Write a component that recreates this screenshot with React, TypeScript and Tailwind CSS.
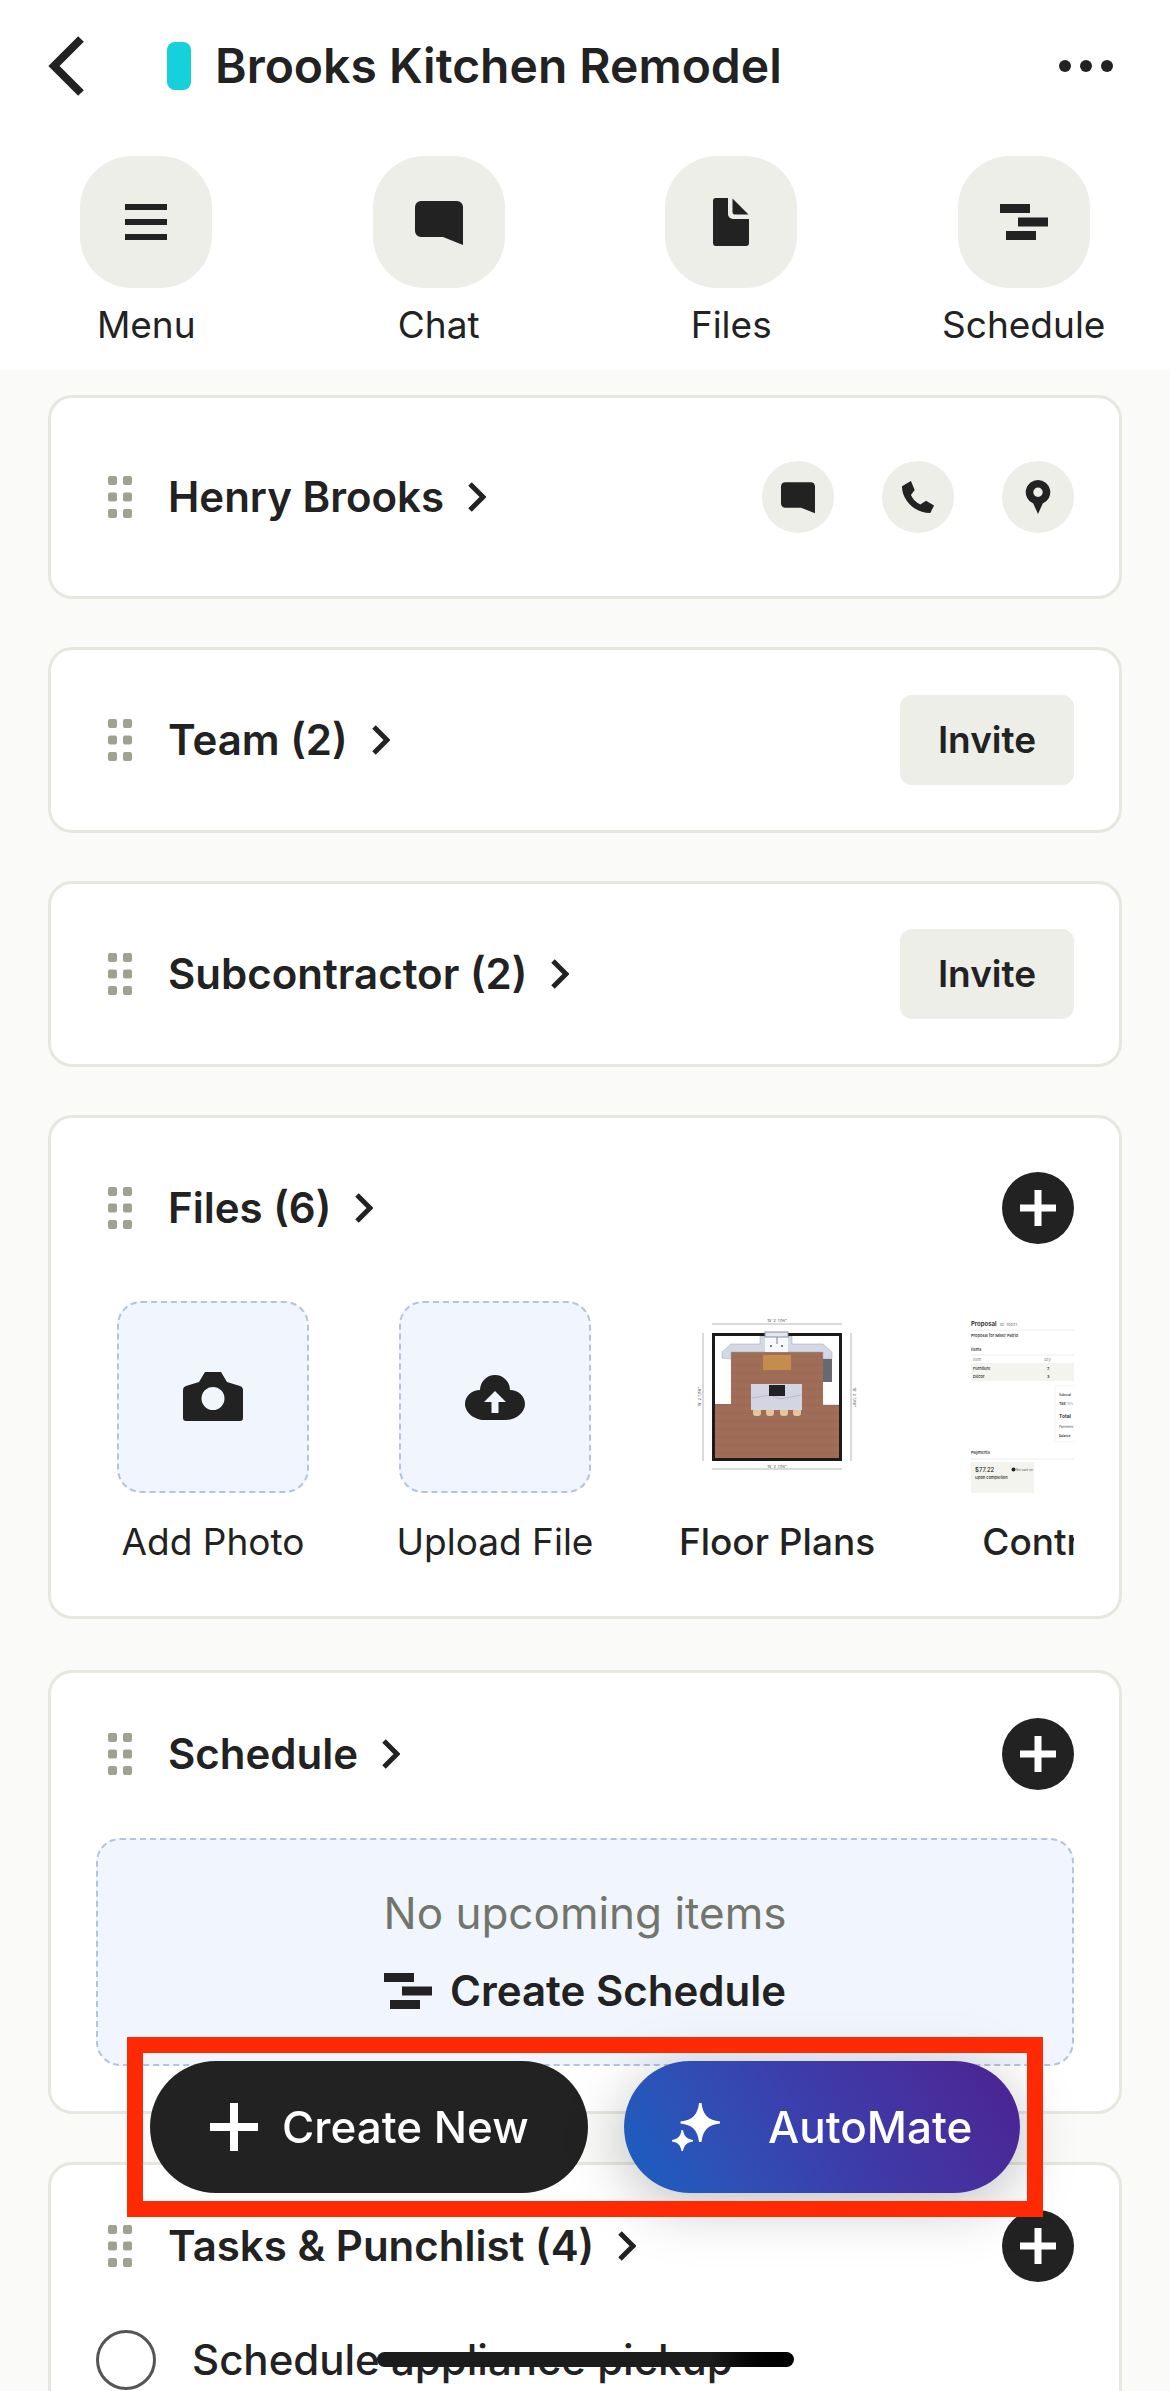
import type { ReactNode } from "react";

type IconProps = { className?: string };

const MenuIcon = ({ className }: IconProps) => (
  <svg viewBox="0 0 48 48" className={className} fill="currentColor" aria-hidden="true">
    <path d="M3 6h42v6H3zM3 21h42v6H3zM3 36h42v6H3z" />
  </svg>
);

const ChatIcon = ({ className }: IconProps) => (
  <svg viewBox="0 0 48 48" className={className} fill="currentColor" aria-hidden="true">
    <path d="M6 3h36a6 6 0 0 1 6 6v38l-20-8H6a6 6 0 0 1-6-6V9a6 6 0 0 1 6-6z" />
  </svg>
);

const FileIcon = ({ className }: IconProps) => (
  <svg viewBox="0 0 48 48" className={className} fill="currentColor" aria-hidden="true">
    <path d="M9 0h12v16a5 5 0 0 0 5 5h16v24a3 3 0 0 1-3 3H9a3 3 0 0 1-3-3V3a3 3 0 0 1 3-3z" />
    <path d="M25.500 0.500L41.500 16.500H28a2.500 2.500 0 0 1-2.500-2.500z" />
  </svg>
);

const ScheduleIcon = ({ className }: IconProps) => (
  <svg viewBox="0 0 48 48" className={className} fill="currentColor" aria-hidden="true">
    <path d="M0 6h30v9H0zM18 19.500h30v9H18zM6 33h30v9H6z" />
  </svg>
);

const PhoneIcon = ({ className }: IconProps) => (
  <svg viewBox="0 0 36 36" className={className} fill="currentColor" aria-hidden="true">
    <path d="M1 6.500L10.500 1l4 9.500-4 5.500c2 4.500 5.300 8 10 10l6-4 8.500 5-4 8C15.500 35 1 22 1 6.500z" />
  </svg>
);

const PinIcon = ({ className }: IconProps) => (
  <svg viewBox="0 0 36 36" className={className} fill="currentColor" fillRule="evenodd" aria-hidden="true">
    <path d="M18 0A13 13 0 0 0 13 25L18 36l5-11A13 13 0 0 0 18 0zM18 8a5 5 0 1 1 0 10 5 5 0 0 1 0-10z" />
  </svg>
);

const CameraIcon = ({ className }: IconProps) => (
  <svg viewBox="0 0 60 60" className={className} fill="currentColor" fillRule="evenodd" aria-hidden="true">
    <path d="M22 5h16l6 10 13 4q3 1 3 4v28a3 3 0 0 1-3 3H3a3 3 0 0 1-3-3V23q0-3 3-4l13-4zM30 20a11.500 11.500 0 1 0 0 23 11.500 11.500 0 0 0 0-23z" />
  </svg>
);

const CloudIcon = ({ className }: IconProps) => (
  <svg viewBox="0 0 60 60" className={className} fill="currentColor" fillRule="evenodd" aria-hidden="true">
    <path d="M15 23a15 15 0 0 1 30 0c8 0 15 6 15 14 0 9-10 16-19 16H19C10 53 0 46 0 37c0-8 7-14 15-14zM30 24L19 35h7.500v11h7V35H41z" />
  </svg>
);

const SparkleIcon = ({ className }: IconProps) => (
  <svg viewBox="0 0 48 48" className={className} fill="currentColor" aria-hidden="true">
    <path d="M27 0h2.500C31 12 36 17 48 18.500v2C36 22 31 27 29.500 39H27C25.500 27 20.500 22 8.500 20.500v-2C20.500 17 25.500 12 27 0z" />
    <path d="M9.500 27h1.500C12 33.500 15 36 21 37v1.500C15 39.500 12 42 11 48H9.500C8.500 42 6 39.500 0 38.500V37C6 36 8.500 33.500 9.500 27z" />
  </svg>
);

const PlusIcon = ({ className }: IconProps) => (
  <svg viewBox="0 0 36 36" className={className} fill="none" stroke="currentColor" aria-hidden="true">
    <path d="M18 0v36M0 18h36" />
  </svg>
);

const ChevronRight = () => (
  <svg viewBox="0 0 18 30" className="h-[30px] w-[18px]" fill="none" stroke="currentColor" strokeWidth="5" aria-hidden="true">
    <path d="M2 2l13 13L2 28" />
  </svg>
);

const DragHandle = () => (
  <svg viewBox="0 0 24 42" className="ml-3 h-[42px] w-6 text-[#a0a291]" fill="currentColor" aria-hidden="true">
    {[0, 16.5, 33].map((y) => (
      <g key={y}>
        <rect y={y} width="9" height="9" rx="2" />
        <rect x="15" y={y} width="9" height="9" rx="2" />
      </g>
    ))}
  </svg>
);

const shortcuts = [
  { label: "Menu", Icon: MenuIcon },
  { label: "Chat", Icon: ChatIcon },
  { label: "Files", Icon: FileIcon },
  { label: "Schedule", Icon: ScheduleIcon },
];

const contactActions = [
  { label: "Message", Icon: ChatIcon },
  { label: "Call", Icon: PhoneIcon },
  { label: "Map", Icon: PinIcon },
];

function Card({ children, className = "" }: { children: ReactNode; className?: string }) {
  return (
    <section className={`rounded-3xl border-3 border-[#e6e7de] bg-white px-[45px] ${className}`}>
      {children}
    </section>
  );
}

function CardHeader({ title, children }: { title: string; children: ReactNode }) {
  return (
    <div className="flex items-center justify-between">
      <div className="flex items-center gap-9">
        <DragHandle />
        <h2 className="text-[42px] leading-[54px] font-semibold">
          <a href="#" className="flex items-center gap-6">
            {title}
            <ChevronRight />
          </a>
        </h2>
      </div>
      {children}
    </div>
  );
}

function InviteButton() {
  return (
    <button className="h-[90px] w-[174px] rounded-xl bg-[#edeee8] text-[37px] font-semibold">
      Invite
    </button>
  );
}

function AddButton({ label }: { label: string }) {
  return (
    <button
      aria-label={label}
      className="flex size-[72px] items-center justify-center rounded-full bg-[#222] text-white"
    >
      <PlusIcon className="size-9 stroke-7" />
    </button>
  );
}

function FloorPlan() {
  return (
    <svg viewBox="0 0 192 192" className="size-48" role="img" aria-label="Floor plan">
      <rect x="33.500" y="34.500" width="125" height="123" fill="#fff" />
      <path d="M50 50h92v54h16v54H33V103h17z" fill="#a06d58" />
      {[56, 64, 72, 80, 88, 96, 104, 112, 120, 128, 136, 144, 152].map((y) => (
        <path key={y} d={y < 104 ? `M50 ${y}h91` : `M34 ${y}h124`} stroke="#8e5c49" strokeOpacity="0.35" />
      ))}
      {/* counters and sink */}
      <path d="M41 57v-6l9-8h29v-8h32v8h31l9 8v7h-9v-7H50v7z" fill="#d3d8e4" stroke="#9aa0ac" strokeWidth="0.500" />
      <path d="M84 36h23v15H84z" fill="#f6f8fc" />
      <path d="M96 36v7" stroke="#777c88" />
      <circle cx="90" cy="45" r="1" fill="#555" />
      <circle cx="101" cy="45" r="1" fill="#555" />
      <rect x="82" y="54" width="28" height="15" fill="#c48d4e" />
      <rect x="142" y="58" width="9" height="23" fill="#666a70" />
      {/* island */}
      <rect x="72" y="107" width="8" height="8" rx="3" fill="#e3c69c" />
      <rect x="85" y="107" width="8" height="8" rx="3" fill="#e3c69c" />
      <rect x="99" y="107" width="8" height="8" rx="3" fill="#e3c69c" />
      <rect x="112" y="107" width="8" height="8" rx="3" fill="#e3c69c" />
      <rect x="70" y="83" width="51" height="26" fill="#d3d6e2" />
      <path d="M71 97l18-3 10 4 21-4" fill="none" stroke="#a9adbb" strokeWidth="0.700" />
      <rect x="88" y="84" width="16" height="11" fill="#222" />
      {/* walls */}
      <rect x="32.500" y="33.500" width="127" height="125" fill="none" stroke="#1d1a19" strokeWidth="3" />
      <rect x="84" y="31" width="23" height="5" fill="#e3e6ee" stroke="#8a8fa0" />
      <path d="M31 23h130M31 168h130M22 32v128M170 32v128" stroke="#b5b5b5" />
      <g fill="#444" className="font-['Inter',sans-serif] text-[4px]" textAnchor="middle">
        <text x="96" y="21">15' 2 7/16"</text>
        <text x="96" y="167">15' 2 7/16"</text>
        <text transform="translate(20 96) rotate(-90)">15' 2 7/16"</text>
        <text transform="translate(172 96) rotate(90)">15' 2 7/16"</text>
      </g>
    </svg>
  );
}

function ProposalPreview() {
  return (
    <svg viewBox="0 0 192 192" className="size-48" role="img" aria-label="Proposal">
      <path d="M8 29h184M8 54h184M8 158h184" stroke="#ecece8" />
      <rect x="8" y="62" width="184" height="18" fill="#f4f4ef" />
      <rect x="8" y="161" width="63" height="31" fill="#f4f4ef" />
      <rect x="92" y="85" width="100" height="56" fill="#fff" stroke="#f4f4f1" />
      <path d="M96 125h96" stroke="#ddd" />
      <g fill="#222" className="font-['Inter',sans-serif] text-[4px] font-medium">
        <text x="8" y="25" className="text-[6px] font-semibold">Proposal</text>
        <text x="37" y="25" fill="#888">ID: 10021</text>
        <text x="8" y="36">Proposal for Miller Patrio</text>
        <text x="8" y="50">Items</text>
        <text x="10" y="60" fill="#999">Item</text>
        <text x="81" y="60" fill="#999">Qty</text>
        <text x="10" y="69">Furniture</text>
        <text x="84" y="69">2</text>
        <text x="10" y="77">Décor</text>
        <text x="84" y="77">3</text>
        <text x="96" y="95" className="text-[3px]">Subtotal</text>
        <text x="96" y="104">Tax</text>
        <text x="104" y="104" fill="#999" className="text-[3px]">10%</text>
        <text x="96" y="117" className="text-[5px] font-semibold">Total</text>
        <text x="96" y="127" fill="#777" className="text-[3px]">Payments</text>
        <text x="96" y="136" className="text-[3px]">Balance</text>
        <text x="8" y="153">Payments</text>
        <text x="12" y="171" className="text-[6px]">$77.22</text>
        <circle cx="50.500" cy="168.500" r="2" />
        <text x="53" y="170" fill="#777" className="text-[3px]">Not paid yet</text>
        <text x="12" y="178">Upon completion</text>
      </g>
    </svg>
  );
}

function FileTile({ label, children }: { label: string; children: ReactNode }) {
  return (
    <button className="flex w-48 shrink-0 flex-col items-center gap-6 whitespace-nowrap">
      <span className="flex size-48 items-center justify-center rounded-3xl border-2 border-dashed border-[#b6c3dc] bg-[#f1f5fe]">
        {children}
      </span>
      <span className="text-[37px] leading-[50px]">{label}</span>
    </button>
  );
}

function FilePreview({ label, children }: { label: string; children: ReactNode }) {
  return (
    <a href="#" className="flex w-48 shrink-0 flex-col items-center gap-6 whitespace-nowrap">
      {children}
      <span className="text-[37px] leading-[50px] font-medium">{label}</span>
    </a>
  );
}

export default function App() {
  return (
    <div className="flex h-screen flex-col overflow-hidden bg-[#fafaf8] font-['Inter',sans-serif] text-[#222]">
      <header className="bg-white pb-5">
        <div className="flex h-33 items-center px-12">
          <button aria-label="Back">
            <svg viewBox="0 0 36 60" className="h-[60px] w-9" fill="none" stroke="currentColor" strokeWidth="8" aria-hidden="true">
              <path d="M33 3L6 30l27 27" />
            </svg>
          </button>
          <span className="ml-[83px] h-12 w-6 rounded-lg bg-[#16d1db]" />
          <h1 className="ml-6 text-[48px] leading-[60px] font-semibold">Brooks Kitchen Remodel</h1>
          <button aria-label="More options" className="mr-2 ml-auto">
            <svg viewBox="0 0 56 12" className="h-3 w-14" fill="currentColor" aria-hidden="true">
              <circle cx="7" cy="6" r="6" />
              <circle cx="28" cy="6" r="6" />
              <circle cx="49" cy="6" r="6" />
            </svg>
          </button>
        </div>
        <nav className="mt-6 grid grid-cols-4">
          {shortcuts.map(({ label, Icon }) => (
            <a key={label} href="#" className="flex flex-col items-center gap-3">
              <span className="flex size-33 items-center justify-center rounded-[52px] bg-[#edeee8]">
                <Icon className="size-12" />
              </span>
              <span className="text-[37px] leading-[50px]">{label}</span>
            </a>
          ))}
        </nav>
      </header>

      <main className="flex-1 overflow-hidden px-12 pt-[25px]">
        <Card className="py-[63px]">
          <CardHeader title="Henry Brooks">
            <div className="flex gap-12">
              {contactActions.map(({ label, Icon }) => (
                <button
                  key={label}
                  aria-label={label}
                  className="flex size-[72px] items-center justify-center rounded-full bg-[#edeee8]"
                >
                  <Icon className="size-[34px]" />
                </button>
              ))}
            </div>
          </CardHeader>
        </Card>

        <Card className="mt-12 py-[45px]">
          <CardHeader title="Team (2)">
            <InviteButton />
          </CardHeader>
        </Card>

        <Card className="mt-12 py-[45px]">
          <CardHeader title="Subcontractor (2)">
            <InviteButton />
          </CardHeader>
        </Card>

        <Card className="mt-12 pt-[54px] pb-[49px]">
          <CardHeader title="Files (6)">
            <AddButton label="Add file" />
          </CardHeader>
          <div className="mt-[57px] flex gap-[90px] overflow-hidden pl-[21px]">
            <FileTile label="Add Photo">
              <CameraIcon className="size-15" />
            </FileTile>
            <FileTile label="Upload File">
              <CloudIcon className="size-15" />
            </FileTile>
            <FilePreview label="Floor Plans">
              <FloorPlan />
            </FilePreview>
            <FilePreview label="Contract">
              <ProposalPreview />
            </FilePreview>
          </div>
        </Card>

        <Card className="mt-[51px] py-[45px]">
          <CardHeader title="Schedule">
            <AddButton label="Add schedule item" />
          </CardHeader>
          <div className="mt-12 flex h-[228px] flex-col items-center justify-center gap-6 rounded-3xl border-2 border-dashed border-[#b6c3dc] bg-[#f1f5fe]">
            <p className="text-[44px] leading-[54px] text-[#72756c]">No upcoming items</p>
            <button className="flex items-center gap-[18px] text-[42px] leading-[54px] font-semibold">
              <ScheduleIcon className="size-12" />
              Create Schedule
            </button>
          </div>
        </Card>

        <Card className="mt-12 py-[45px]">
          <CardHeader title="Tasks & Punchlist (4)">
            <AddButton label="Add task" />
          </CardHeader>
          <label className="mt-12 flex items-center gap-9 text-[42px] leading-[60px] font-medium">
            <input
              type="checkbox"
              className="size-15 appearance-none rounded-full border-3 border-[#555] bg-white"
            />
            Schedule appliance pickup
          </label>
        </Card>
      </main>

      {/* Floating actions, with the highlight frame on top of their shadow */}
      <div className="fixed inset-x-0 bottom-[174px] flex justify-center">
        <div className="relative flex gap-9 px-[23px] py-6 text-[44px] font-medium text-white">
          <button className="flex h-33 w-[438px] items-center gap-6 rounded-full bg-[#222] pl-15">
            <PlusIcon className="size-12 stroke-[6px]" />
            Create New
          </button>
          <button className="flex h-33 w-[396px] items-center gap-12 rounded-full bg-linear-60 from-[#1261c0] via-[#3b3dab] to-[#4c2291] pl-12 shadow-[0_12px_60px_rgba(0,0,0,0.25)]">
            <SparkleIcon className="size-12" />
            AutoMate
          </button>
          <span className="pointer-events-none absolute inset-0 border-16 border-[#ff2a04]" />
        </div>
      </div>

      {/* Home indicator */}
      <div className="fixed inset-x-0 bottom-6 flex justify-center">
        <span className="h-[15px] w-[417px] rounded-full bg-linear-to-r from-[#1c1c1c] from-80% to-black" />
      </div>
    </div>
  );
}
